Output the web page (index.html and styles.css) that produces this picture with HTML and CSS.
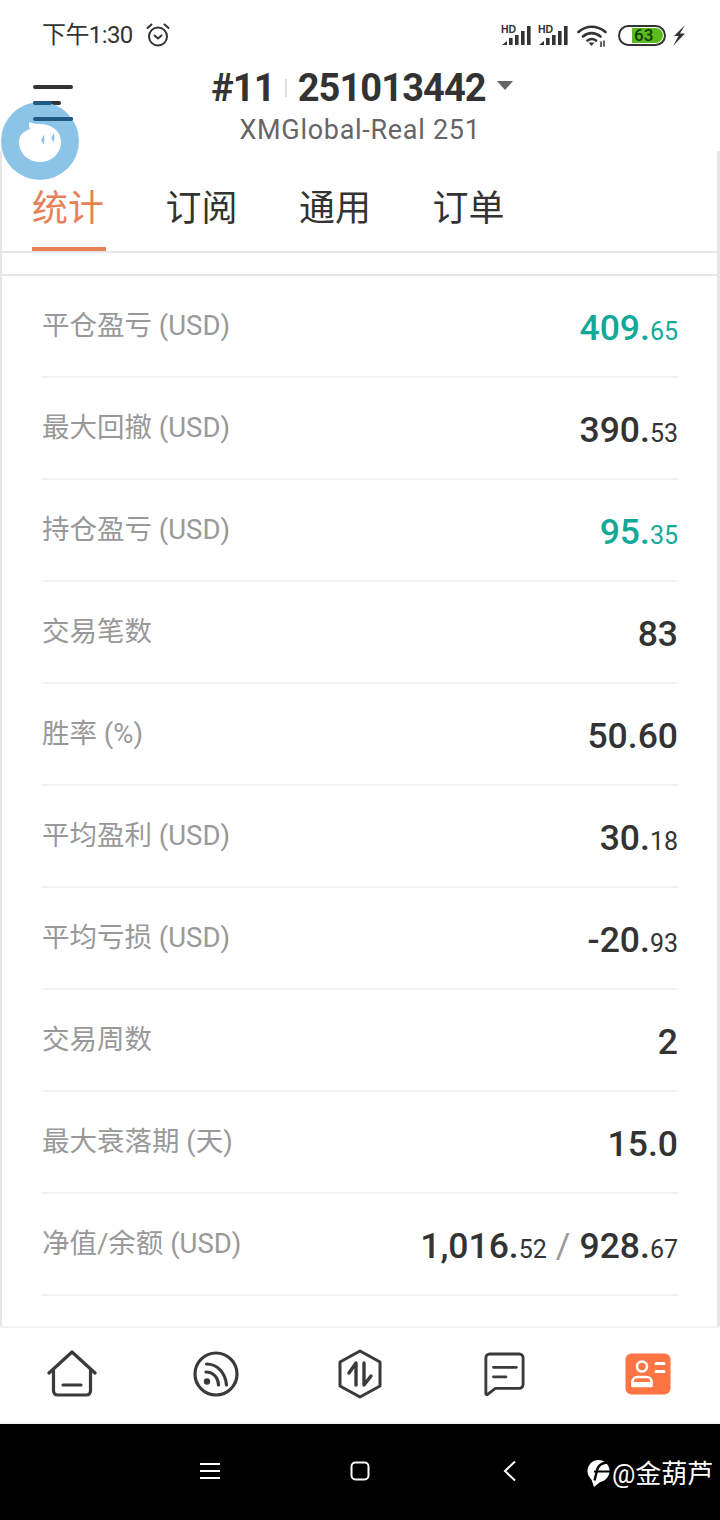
FILE: index.html
```html
<!DOCTYPE html>
<html lang="zh-CN">
<head>
<meta charset="UTF-8">
<title>统计</title>
<link rel="stylesheet" href="styles.css">
</head>
<body>

<div class="status">
  <div class="status-left">
    <span class="time">下午1:30</span>
    <svg class="alarm" width="24" height="24" viewBox="0 0 24 24" fill="none" stroke="#333" stroke-width="2" stroke-linecap="round" stroke-linejoin="round">
      <circle cx="12" cy="13.5" r="9"/>
      <path d="M8.5 12.5l3.5 3 3.5-3M1.5 5l4-3.5M22.5 5l-4-3.5"/>
    </svg>
  </div>
  <div class="status-right">
    <svg class="signal" width="30" height="22" viewBox="0 0 30 22">
      <text x="0" y="9" class="hd">HD</text>
      <path fill="#333" d="M1 21l5-4v4zM8 14h3.600v7H8zM14 11h3.600v10H14zM20 7h3.600v14H20zM26 2h3.600v19H26z"/>
    </svg>
    <svg class="signal" width="30" height="22" viewBox="0 0 30 22">
      <text x="0" y="9" class="hd">HD</text>
      <path fill="#333" d="M1 21l5-4v4zM8 14h3.600v7H8zM14 11h3.600v10H14zM20 7h3.600v14H20zM26 2h3.600v19H26z"/>
    </svg>
    <svg class="wifi" width="30" height="23" viewBox="0 0 30 23" fill="none" stroke="#333" stroke-width="2.600" stroke-linecap="round">
      <path d="M1.500 8C9 1 20 1 28.500 8M6 12.500c5-4.500 12-4.500 17.500 0M10.500 16.500c3-2 6-2 8.500 0"/>
      <path d="M11.500 18.500h6l-3 3.500z" fill="#333" stroke="none"/>
      <path d="M24 18v5M27 17v5" stroke-width="1.500"/>
    </svg>
    <div class="battery"><span class="battery-fill">63</span></div>
    <svg class="bolt" width="14" height="21" viewBox="0 0 14 21"><path fill="#333" d="M13 0L2 11h4.500L1 21l12-12.500H8z"/></svg>
  </div>
</div>

<div class="head">
  <div class="menu"><i></i><i class="short"></i><i></i></div>
  <div class="head-center">
    <div class="title">
      <span>#11</span><span class="sep"></span><span>251013442</span><span class="caret"></span>
    </div>
    <div class="subtitle">XMGlobal-Real 251</div>
  </div>
</div>

<div class="panel">
  <div class="tabs">
    <div class="tab active">统计</div>
    <div class="tab">订阅</div>
    <div class="tab">通用</div>
    <div class="tab">订单</div>
  </div>
  <div class="list">
    <div class="row"><span class="label">平仓盈亏 (USD)</span><span class="value green">409.<small>65</small></span></div>
    <div class="row"><span class="label">最大回撤 (USD)</span><span class="value">390.<small>53</small></span></div>
    <div class="row"><span class="label">持仓盈亏 (USD)</span><span class="value green">95.<small>35</small></span></div>
    <div class="row"><span class="label">交易笔数</span><span class="value">83</span></div>
    <div class="row"><span class="label">胜率 (%)</span><span class="value">50.60</span></div>
    <div class="row"><span class="label">平均盈利 (USD)</span><span class="value">30.<small>18</small></span></div>
    <div class="row"><span class="label">平均亏损 (USD)</span><span class="value">-20.<small>93</small></span></div>
    <div class="row"><span class="label">交易周数</span><span class="value">2</span></div>
    <div class="row"><span class="label">最大衰落期 (天)</span><span class="value">15.0</span></div>
    <div class="row"><span class="label">净值/余额 (USD)</span><span class="value">1,016.<small>52</small><em>/</em>928.<small>67</small></span></div>
  </div>
</div>

<div class="nav">
  <div class="nav-item">
    <svg width="50" height="50" viewBox="0 0 50 50" fill="none" stroke="#3a3a3a" stroke-width="3.200" stroke-linecap="round" stroke-linejoin="round">
      <path d="M2 24L25 3l23 21"/>
      <path d="M6.500 21v21a4 4 0 0 0 4 4h29a4 4 0 0 0 4-4V21"/>
      <path d="M16 36h18"/>
    </svg>
  </div>
  <div class="nav-item">
    <svg width="48" height="48" viewBox="0 0 48 48" fill="none" stroke="#3a3a3a" stroke-width="3.200" stroke-linecap="round">
      <circle cx="24" cy="24" r="21"/>
      <circle cx="15" cy="31.500" r="3.200" fill="#3a3a3a" stroke="none"/>
      <path d="M14 22c7 0 12 5 12.500 13M14.500 14c11 0 19 9 20 21"/>
    </svg>
  </div>
  <div class="nav-item">
    <svg width="46" height="50" viewBox="0 0 46 50" fill="none" stroke="#3a3a3a" stroke-width="3" stroke-linejoin="round">
      <path d="M23 2l20 11v24L23 48 3 37V13z"/>
      <path d="M19 36V14l-7 10" stroke-linecap="round" stroke-width="3.400"/>
      <path d="M27 14v22l7-9" stroke-linecap="round" stroke-width="3.400"/>
    </svg>
  </div>
  <div class="nav-item">
    <svg width="42" height="46" viewBox="0 0 44 46" fill="none" stroke="#3a3a3a" stroke-width="3" stroke-linecap="round" stroke-linejoin="round">
      <path d="M7 2h31a4 4 0 0 1 4 4v28a4 4 0 0 1-4 4H13l-8.500 6.500a1 1 0 0 1-1.500-1V6a4 4 0 0 1 4-4z"/>
      <path d="M11 16h24M11 26h13"/>
    </svg>
  </div>
  <div class="nav-item">
    <svg width="46" height="42" viewBox="0 0 46 42">
      <rect x="0.500" y="0.500" width="45" height="41" rx="6" fill="#ff7443"/>
      <circle cx="17" cy="13.500" r="5" fill="none" stroke="#fff" stroke-width="2.600"/>
      <path d="M7.500 29a5 5 0 0 1 5-5h9a5 5 0 0 1 5 5v4h-19z" fill="none" stroke="#fff" stroke-width="2.600" stroke-linejoin="round"/>
      <path d="M7 29h20v5H7z" fill="#fff"/>
      <path d="M31 10.500h8M31 18.500h8" stroke="#fff" stroke-width="3" stroke-linecap="round"/>
    </svg>
  </div>
</div>

<div class="softkeys">
  <div class="softkey">
    <svg width="20" height="18" viewBox="0 0 20 18" stroke="#fff" stroke-width="2"><path d="M0 2h20M0 9h20M0 16h20"/></svg>
  </div>
  <div class="softkey">
    <svg width="20" height="20" viewBox="0 0 20 20" fill="none" stroke="#fff" stroke-width="2"><rect x="1.500" y="1.500" width="17" height="17" rx="4"/></svg>
  </div>
  <div class="softkey">
    <svg width="14" height="22" viewBox="0 0 14 22" fill="none" stroke="#fff" stroke-width="2"><path d="M12 1.500L2 11l10 9.500"/></svg>
  </div>
  <div class="watermark">
    <svg width="25" height="28" viewBox="0 0 25 28">
      <circle cx="12.500" cy="11" r="11" fill="#fff"/>
      <path fill="#fff" d="M5 18h14L8 27z"/>
      <path d="M21 2.500c-6 .5-9 3-10 8l-2.500 10" fill="none" stroke="#000" stroke-width="2.400"/>
      <path d="M8 11.500h17" stroke="#000" stroke-width="2"/>
    </svg>
    <span>@金葫芦</span>
  </div>
</div>

<!-- floating assistant button, sits over the header -->
<svg class="bubble" width="80" height="80" viewBox="0 0 80 80">
  <circle cx="40" cy="40" r="39" fill="#8cc4e8"/>
  <path d="M35 2H50M35 18H71" fill="none" stroke="#1f5a85" stroke-width="4" stroke-linecap="round"/>
  <path d="M29 21c3 1 6 2 10 2 13 0 22 7 22 18 0 11-9 20-21 20-12 0-21-9-21-20 0-6 3-10 11-13-1-2-1-4-1-7z" fill="#fff"/>
  <path d="M43 34c2 2 2 6 0 10 0-2-1-4-2-5 1-1 2-3 2-5zM53 32c2 2 2 6 0 10 0-2-1-4-2-5 1-1 2-3 2-5z" fill="#8cc4e8"/>
</svg>

</body>
</html>
```

FILE: styles.css
```css
* {
  box-sizing: border-box;
}

body {
  margin: 0;
  width: 720px;
  height: 1520px;
  display: flex;
  flex-direction: column;
  overflow: hidden;
  position: relative;
  background-color: white;
  color: #333;
  font-family: Roboto, "Noto Sans CJK SC", sans-serif;
}

.status {
  height: 70px;
  flex: none;
  display: flex;
  justify-content: space-between;
  align-items: center;
  padding: 0 34px 0 42px;
}

.status-left,
.status-right {
  display: flex;
  align-items: center;
}

.time {
  font-size: 24px;
  line-height: 30px;
  letter-spacing: -0.6px;
}

.alarm {
  margin-left: 13px;
}

.status-right svg {
  display: block;
}

.signal {
  margin-right: 7px;
}

.hd {
  font-family: "Liberation Sans", sans-serif;
  font-size: 10.500px;
  font-weight: bold;
  fill: #333;
}

.wifi {
  margin: 0 11px 0 2px;
}

.battery {
  width: 48px;
  height: 21px;
  border: 2.5px solid #333;
  border-radius: 11px;
  padding: 1px 1px 1px 12px;
  display: flex;
}

.battery-fill {
  flex: 1;
  background-color: #5cbb1c;
  border-radius: 0 8px 8px 0;
  color: #143d05;
  font-size: 17px;
  font-weight: 500;
  line-height: 15px;
  padding-left: 2px;
}

.bolt {
  margin-left: 6px;
}

.head {
  height: 81px;
  flex: none;
  display: grid;
  grid-template-columns: 1fr auto 1fr;
  text-align: center;
}

.menu {
  grid-column: 1;
  width: 73px;
  padding: 15px 0 0 33px;
}

.menu i {
  display: block;
  height: 4px;
  margin-bottom: 12px;
  border-radius: 2px;
  background-color: #333;
}

.menu i.short {
  width: 28px;
}

.head-center {
  grid-column: 2;
}

.title {
  display: flex;
  justify-content: center;
  align-items: center;
  height: 40px;
  margin-top: -2px;
  padding-left: 4px;
  font-size: 38px;
  font-weight: 700;
  line-height: 40px;
  letter-spacing: -0.9px;
}

.sep {
  width: 2px;
  height: 18px;
  margin: 0 11px 0 10px;
  background-color: #ddd;
}

.caret {
  width: 0;
  height: 0;
  margin: -6px 0 0 11px;
  border-left: 8px solid transparent;
  border-right: 8px solid transparent;
  border-top: 9px solid #666;
}

.subtitle {
  margin-top: 6px;
  font-size: 27px;
  line-height: 32px;
  letter-spacing: 0.7px;
  color: #666;
}

.panel {
  flex: 1;
  border-left: 2px solid #e6e6e6;
  border-right: 3px solid #e6e6e6;
}

.tabs {
  height: 102px;
  display: flex;
  gap: 63.500px;
  padding-left: 30px;
  border-bottom: 2px solid #e6e6e6;
}

.tab {
  width: 70px;
  padding-top: 32px;
  font-size: 36px;
  line-height: 52px;
  white-space: nowrap;
  position: relative;
}

.tab.active {
  color: #e8805a;
}

.tab.active::after {
  content: "";
  position: absolute;
  left: 0;
  right: -4px;
  bottom: 0;
  height: 4px;
  background-color: #e8805a;
}

.list {
  margin: 21px -3px 0 -2px;
  padding: 0 42px;
  border-top: 2px solid #e6e6e6;
}

.row {
  height: 102px;
  display: flex;
  justify-content: space-between;
  align-items: center;
  border-bottom: 2px solid #f3f3f3;
}

.label {
  margin-bottom: 6px;
  font-size: 27.500px;
  color: #999;
}

.value {
  margin-top: 3px;
  font-size: 35.500px;
  font-weight: 500;
  color: #333;
}

.value.green {
  color: #12a998;
}

.value small {
  font-size: 25px;
  font-weight: 400;
}

.value em {
  font-style: normal;
  font-weight: 400;
  color: #999;
  margin: 0 9px;
}

.nav {
  height: 98px;
  flex: none;
  display: flex;
  padding-bottom: 2px;
  border-top: 2px solid #f3f3f3;
  border-bottom: 2px solid #f5f5f5;
}

.nav-item {
  flex: 1;
  display: flex;
  justify-content: center;
  align-items: center;
}

.softkeys {
  height: 96px;
  flex: none;
  position: relative;
  display: flex;
  justify-content: center;
  align-items: center;
  gap: 130px;
  background-color: black;
  padding-right: 1px;
  padding-bottom: 2px;
}

.softkey {
  width: 20px;
  display: flex;
  justify-content: center;
}

.watermark {
  position: absolute;
  left: 586px;
  top: 33px;
  display: flex;
  align-items: center;
  gap: 1px;
  color: white;
  font-size: 26px;
  line-height: 34px;
  white-space: nowrap;
}

.bubble {
  position: absolute;
  left: 0;
  top: 101px;
}
```
